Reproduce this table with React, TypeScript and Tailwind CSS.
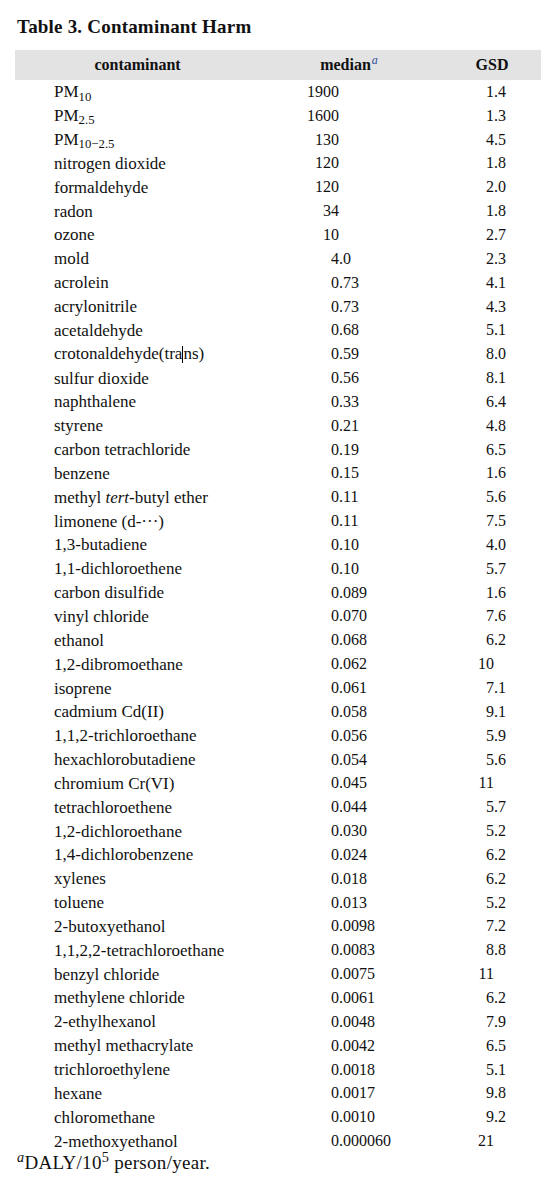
type Row = { name: React.ReactNode; median: string; gsd: string }

const rows: Row[] = [
  { name: <>PM<sub>10</sub></>, median: '1900', gsd: '1.4' },
  { name: <>PM<sub>2.5</sub></>, median: '1600', gsd: '1.3' },
  { name: <>PM<sub>10−2.5</sub></>, median: '130', gsd: '4.5' },
  { name: 'nitrogen dioxide', median: '120', gsd: '1.8' },
  { name: 'formaldehyde', median: '120', gsd: '2.0' },
  { name: 'radon', median: '34', gsd: '1.8' },
  { name: 'ozone', median: '10', gsd: '2.7' },
  { name: 'mold', median: '4.0', gsd: '2.3' },
  { name: 'acrolein', median: '0.73', gsd: '4.1' },
  { name: 'acrylonitrile', median: '0.73', gsd: '4.3' },
  { name: 'acetaldehyde', median: '0.68', gsd: '5.1' },
  {
    name: (
      <>
        crotonaldehyde(tra
        <span className="inline-block h-[17px] w-px bg-black align-[-4px]" />
        ns)
      </>
    ),
    median: '0.59',
    gsd: '8.0',
  },
  { name: 'sulfur dioxide', median: '0.56', gsd: '8.1' },
  { name: 'naphthalene', median: '0.33', gsd: '6.4' },
  { name: 'styrene', median: '0.21', gsd: '4.8' },
  { name: 'carbon tetrachloride', median: '0.19', gsd: '6.5' },
  { name: 'benzene', median: '0.15', gsd: '1.6' },
  { name: <>methyl <i>tert</i>-butyl ether</>, median: '0.11', gsd: '5.6' },
  { name: 'limonene (d-···)', median: '0.11', gsd: '7.5' },
  { name: '1,3-butadiene', median: '0.10', gsd: '4.0' },
  { name: '1,1-dichloroethene', median: '0.10', gsd: '5.7' },
  { name: 'carbon disulfide', median: '0.089', gsd: '1.6' },
  { name: 'vinyl chloride', median: '0.070', gsd: '7.6' },
  { name: 'ethanol', median: '0.068', gsd: '6.2' },
  { name: '1,2-dibromoethane', median: '0.062', gsd: '10' },
  { name: 'isoprene', median: '0.061', gsd: '7.1' },
  { name: 'cadmium Cd(II)', median: '0.058', gsd: '9.1' },
  { name: '1,1,2-trichloroethane', median: '0.056', gsd: '5.9' },
  { name: 'hexachlorobutadiene', median: '0.054', gsd: '5.6' },
  { name: 'chromium Cr(VI)', median: '0.045', gsd: '11' },
  { name: 'tetrachloroethene', median: '0.044', gsd: '5.7' },
  { name: '1,2-dichloroethane', median: '0.030', gsd: '5.2' },
  { name: '1,4-dichlorobenzene', median: '0.024', gsd: '6.2' },
  { name: 'xylenes', median: '0.018', gsd: '6.2' },
  { name: 'toluene', median: '0.013', gsd: '5.2' },
  { name: '2-butoxyethanol', median: '0.0098', gsd: '7.2' },
  { name: '1,1,2,2-tetrachloroethane', median: '0.0083', gsd: '8.8' },
  { name: 'benzyl chloride', median: '0.0075', gsd: '11' },
  { name: 'methylene chloride', median: '0.0061', gsd: '6.2' },
  { name: '2-ethylhexanol', median: '0.0048', gsd: '7.9' },
  { name: 'methyl methacrylate', median: '0.0042', gsd: '6.5' },
  { name: 'trichloroethylene', median: '0.0018', gsd: '5.1' },
  { name: 'hexane', median: '0.0017', gsd: '9.8' },
  { name: 'chloromethane', median: '0.0010', gsd: '9.2' },
  { name: '2-methoxyethanol', median: '0.000060', gsd: '21' },
]

// split a number so the columns line up on the decimal point
const split = (v: string) => {
  const i = v.indexOf('.')
  return i < 0 ? [v, ''] : [v.slice(0, i), v.slice(i)]
}

export default function App() {
  return (
    <div className="min-h-[1187px] w-[556px] bg-white pt-[14px] text-[#111] font-['Liberation_Serif',serif]">
      <h1 className="pl-[17px] text-[19px] font-bold leading-[26px] tracking-[0.2px]">
        Table 3. Contaminant Harm
      </h1>

      {/* header band */}
      <div className="mx-[15px] mt-[10px] flex h-[30px] items-center bg-[#e3e3e3] text-[16px] font-bold">
        <div className="w-[245px] text-center">contaminant</div>
        <div className="w-[178px] text-center">
          median<sup className="ml-[1px] font-normal italic text-[#2d4f9f]">a</sup>
        </div>
        <div className="w-[102px] text-center pl-[6px]">GSD</div>
      </div>

      {/* rows */}
      <div className="flex flex-col">
        {rows.map((r, idx) => {
          const [mi, mf] = split(r.median)
          const [gi, gf] = split(r.gsd)
          return (
            <div key={idx} className="flex h-[23.85px] items-center leading-none">
              <div className="w-[299px] pl-[54px] text-[17px] whitespace-nowrap">{r.name}</div>
              <div className="w-[40px] text-right text-[16px]">{mi}</div>
              <div className="w-[115px] text-left text-[16px]">{mf}</div>
              <div className="w-[40px] text-right text-[16px]">{gi}</div>
              <div className="text-left text-[16px]">{gf}</div>
            </div>
          )
        })}
      </div>

      <p className="mt-[1px] pl-[17px] text-[19px] leading-[18px] tracking-[0.3px]">
        <sup className="italic">a</sup>DALY/10<sup>5</sup> person/year.
      </p>
    </div>
  )
}
